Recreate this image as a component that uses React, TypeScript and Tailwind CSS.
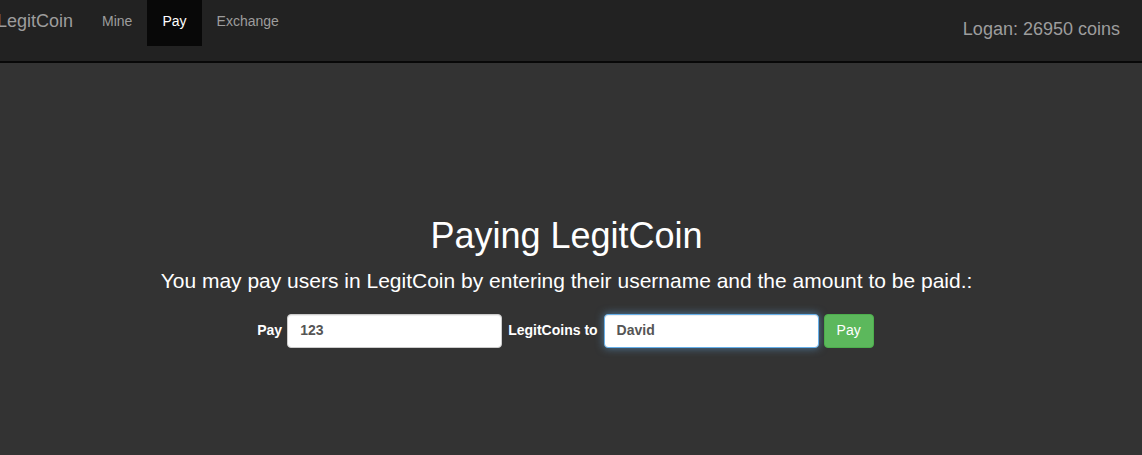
import React from "react";

export default function App() {
  const font = { fontFamily: '"Liberation Sans", Arial, Helvetica, sans-serif' };
  return (
    <div className="w-[1142px] h-[455px] bg-[#333333] overflow-hidden" style={font}>
      <div className="h-[63px] bg-[#222222] border-b-2 border-[#080808] flex items-start">
        <div className="ml-[-3px] pt-[11px] text-[18px] leading-[20px] text-[#9d9d9d]">LegitCoin</div>
        <div className="ml-[14px] flex">
          <div className="h-[46px] px-[15px] pt-[11px] text-[14px] leading-[20px] text-[#9d9d9d]">Mine</div>
          <div className="h-[46px] px-[15px] pt-[11px] text-[14px] leading-[20px] text-white bg-[#080808]">Pay</div>
          <div className="h-[46px] px-[15px] pt-[11px] text-[14px] leading-[20px] text-[#9d9d9d]">Exchange</div>
        </div>
        <div className="ml-auto mr-[22px] pt-[19px] text-[18px] leading-[20px] text-[#9d9d9d]">Logan: 26950 coins</div>
      </div>
      <div className="flex flex-col items-center pr-[9px] pt-[153px] text-white">
        <div className="text-[36px] leading-[39.6px]">Paying LegitCoin</div>
        <div className="mt-[13px] text-[21px] leading-[23px]">
          You may pay users in LegitCoin by entering their username and the amount to be paid.:
        </div>
        <div className="mt-[22px] ml-[-2px] flex items-center gap-[5px] text-[14px] font-bold">
          <span>Pay</span>
          <div className="w-[215px] h-[34px] bg-white rounded-[4px] border border-[#cccccc] px-[12px] flex items-center text-[#555555] shadow-[inset_0_1px_1px_rgba(0,0,0,0.075)]">
            123
          </div>
          <span className="mx-[1px]">LegitCoins to</span>
          <div className="w-[215px] h-[34px] bg-white rounded-[4px] border border-[#66afe9] px-[12px] flex items-center text-[#555555] shadow-[inset_0_1px_1px_rgba(0,0,0,0.075),0_0_8px_rgba(102,175,233,0.6)]">
            David
          </div>
          <button className="h-[34px] px-[12px] rounded-[4px] bg-[#5cb85c] border border-[#4cae4c] text-white font-normal text-[14px]">
            Pay
          </button>
        </div>
      </div>
    </div>
  );
}
